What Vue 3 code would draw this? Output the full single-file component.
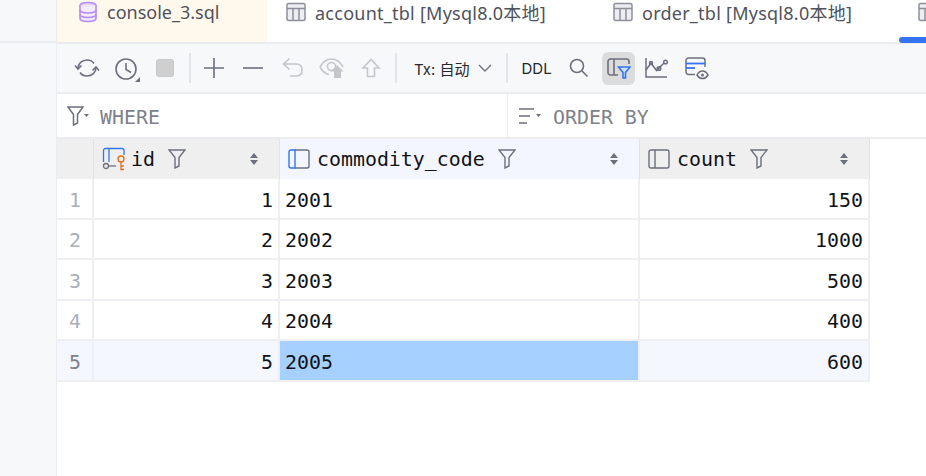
<script setup>
const rows = [
  { id: 1, code: 2001, count: 150 },
  { id: 2, code: 2002, count: 1000 },
  { id: 3, code: 2003, count: 500 },
  { id: 4, code: 2004, count: 400 },
  { id: 5, code: 2005, count: 600 }
]
</script>

<template>
  <div class="page">
    <aside class="side">
      <div class="side-top"></div>
    </aside>

    <main class="main">
      <div class="tabs">
        <div class="tab tab-console">
          <svg width="20" height="22" viewBox="0 0 20 22" fill="none" stroke="#b48cf2" stroke-width="1.6">
            <ellipse cx="10" cy="4.5" rx="8" ry="3" fill="#ead9fc" />
            <path d="M2 4.5v13c0 1.7 3.6 3 8 3s8-1.3 8-3v-13" fill="#f3eafd" />
            <path d="M2 9c0 1.7 3.6 3 8 3s8-1.3 8-3M2 13.5c0 1.7 3.6 3 8 3s8-1.3 8-3" />
          </svg>
          <span>console_3.sql</span>
        </div>
        <div class="tab tab-account">
          <svg class="tbl-icon" width="20" height="20" viewBox="0 0 20 20" fill="#eeeef2" stroke="#8d8f9b" stroke-width="1.5">
            <rect x="1" y="1.5" width="18" height="17" rx="2" />
            <path d="M1 6.5h18M7 6.5v12M13 6.5v12" fill="none" />
          </svg>
          <span class="tbl-name">account_tbl [Mysql8.0本地]</span>
        </div>
        <div class="tab tab-order">
          <svg class="tbl-icon" width="20" height="20" viewBox="0 0 20 20" fill="#eeeef2" stroke="#8d8f9b" stroke-width="1.5">
            <rect x="1" y="1.5" width="18" height="17" rx="2" />
            <path d="M1 6.5h18M7 6.5v12M13 6.5v12" fill="none" />
          </svg>
          <span class="tbl-name">order_tbl [Mysql8.0本地]</span>
        </div>
        <div class="tab tab-active">
          <svg class="tbl-icon" width="20" height="20" viewBox="0 0 20 20" fill="#eeeef2" stroke="#8d8f9b" stroke-width="1.5">
            <rect x="1" y="1.5" width="18" height="17" rx="2" />
            <path d="M1 6.5h18M7 6.5v12M13 6.5v12" fill="none" />
          </svg>
        </div>
      </div>

      <div class="toolbar">
        <button class="tool">
          <svg width="26" height="22" viewBox="0 0 26 22" fill="none" stroke="#6c707e" stroke-width="1.6">
            <path d="M4 11.5C4 6.5 8 3 13 3c3 0 5.5 1.2 7 3.5" />
            <path d="M22 10.5c0 5-4 8.500-9 8.500-3 0-5.500-1.200-7-3.500" />
            <path d="M1 8.500l3 3.500 3.500-3.500M18.500 13.500l3.500-3.500 3 3.500" />
          </svg>
        </button>
        <button class="tool">
          <svg width="28" height="28" viewBox="0 0 28 28" fill="none" stroke="#6c707e" stroke-width="1.6">
            <circle cx="14" cy="15" r="10" />
            <path d="M14 9v6.500l5 3" />
            <path d="M28 23v5h-5z" fill="#6c707e" stroke="none" />
          </svg>
        </button>
        <button class="tool">
          <span class="stop"></span>
        </button>
        <span class="sep sep-first"></span>
        <button class="tool">
          <svg width="20" height="20" viewBox="0 0 20 20" stroke="#6c707e" stroke-width="1.600">
            <path d="M0 10h20M10 0v20" />
          </svg>
        </button>
        <button class="tool">
          <svg width="20" height="20" viewBox="0 0 20 20" stroke="#6c707e" stroke-width="1.600">
            <path d="M0 10h20" />
          </svg>
        </button>
        <button class="tool tool-undo">
          <svg width="22" height="22" viewBox="0 0 22 22" fill="none" stroke="#c4c6cc" stroke-width="1.600">
            <path d="M7.500 1.500L1.500 7l6 5.500" />
            <path d="M1.500 7h13c3.500 0 5.500 2.500 5.500 6s-2 6-5.500 6H8" />
          </svg>
        </button>
        <button class="tool">
          <svg width="26" height="22" viewBox="0 0 26 22" fill="none" stroke="#c4c6cc" stroke-width="1.600">
            <path d="M1 10c3-5.500 7-8 11.500-8S21 4.500 24 10" />
            <path d="M1 10c2.500 4.500 5.500 7 9 7.500" />
            <circle cx="12.500" cy="9.500" r="4" />
            <path d="M18 8l6.500 6.500H22V21h-7v-6.500h-3z" fill="#c4c6cc" stroke="none" />
          </svg>
        </button>
        <button class="tool">
          <svg width="20" height="20" viewBox="0 0 20 20" fill="none" stroke="#c4c6cc" stroke-width="1.600">
            <path d="M10 1.500L2 10h4.500v8.500h7V10H18z" />
          </svg>
        </button>
        <span class="sep sep-tx"></span>
        <div class="tx">
          <span>Tx: 自动</span>
          <svg width="14" height="8" viewBox="0 0 14 8" fill="none" stroke="#6c707e" stroke-width="1.400">
            <path d="M1 1l6 6 6-6" />
          </svg>
        </div>
        <span class="sep sep-ddl"></span>
        <span class="ddl">DDL</span>
        <button class="tool tool-search">
          <svg width="20" height="20" viewBox="0 0 20 20" fill="none" stroke="#6c707e" stroke-width="1.600">
            <circle cx="8" cy="8" r="6.500" />
            <path d="M13 13l5.500 5.500" />
          </svg>
        </button>
        <button class="tool tool-on">
          <svg width="24" height="24" viewBox="0 0 24 24" fill="none" stroke="#6c707e" stroke-width="1.600">
            <path d="M14 3H3.500A2.500 2.500 0 0 0 1 5.500v11A2.500 2.500 0 0 0 3.500 19H11M7 3v16M14 3h6a2.500 2.500 0 0 1 2 2.500V8" />
            <path d="M11.500 11h11.500l-4.500 5.500V22h-2.500v-5.500z" stroke="#3574f0" fill="#cfe0fb" />
          </svg>
        </button>
        <button class="tool tool-chart">
          <svg width="24" height="20" viewBox="0 0 24 20" fill="none" stroke="#6c707e" stroke-width="1.500">
            <path d="M1 0v19h21" />
            <path d="M1 12l5-7 5.500 7.500L19 5" />
            <circle cx="6" cy="5" r="1.500" />
            <circle cx="14" cy="10.500" r="1.800" />
            <circle cx="20.500" cy="4" r="1.800" />
          </svg>
        </button>
        <button class="tool tool-view">
          <svg width="24" height="24" viewBox="0 0 24 24" fill="none" stroke="#6c707e" stroke-width="1.500">
            <path d="M10 18.500H3.500A2.500 2.500 0 0 1 1 16V4.500A2.500 2.500 0 0 1 3.500 2h14A2.500 2.500 0 0 1 20 4.500V11" />
            <path d="M1 7.500h19" stroke="#3574f0" stroke-width="1.800" />
            <path d="M1 12h9" stroke="#3574f0" stroke-width="1.800" />
            <path d="M12 19c1.500-3 3.500-4 5.500-4s4 1 5.500 4c-1.500 2.500-3.500 3.500-5.500 3.500S13.500 21.500 12 19z" fill="#f7f8fa" />
            <circle cx="17.500" cy="19" r="1.500" fill="#6c707e" stroke="none" />
          </svg>
        </button>
      </div>

      <div class="filters">
        <div class="filter filter-where">
          <svg width="22" height="20" viewBox="0 0 22 20" fill="none" stroke="#6c707e" stroke-width="1.500">
            <path d="M1 1h15l-5.500 7.500V17L6.500 19V8.500z" />
            <path d="M17 8h5l-2.500 3z" fill="#6c707e" stroke="none" />
          </svg>
          <span class="filter-word">WHERE</span>
        </div>
        <div class="filter filter-order">
          <svg width="22" height="16" viewBox="0 0 22 16" fill="none" stroke="#6c707e" stroke-width="1.500">
            <path d="M0 1h15M0 8h11M0 15h8" />
            <path d="M17 6h5l-2.500 3z" fill="#6c707e" stroke="none" />
          </svg>
          <span class="filter-word">ORDER BY</span>
        </div>
      </div>

      <div class="grid">
        <div class="cell head corner"></div>
        <div class="cell head">
          <svg class="col-key" width="24" height="24" viewBox="0 0 24 24" fill="none" stroke="#3574f0" stroke-width="1.300">
            <path d="M1.500 15V3.500A2 2 0 0 1 3.500 1.500H7v13.500M7 1.500h13a2 2 0 0 1 2 2V8" />
            <circle cx="4" cy="19" r="2.500" stroke="#6c707e" />
            <path d="M7 19h7" stroke="#6c707e" />
            <circle cx="19" cy="12" r="3" stroke="#e66d17" />
            <path d="M19 15v7.500h3M19 19h3" stroke="#e66d17" />
          </svg>
          <span class="col-name">id</span>
          <svg class="col-filter" width="18" height="20" viewBox="0 0 18 20" fill="none" stroke="#6c707e" stroke-width="1.400">
            <path d="M1 1h16l-6 7.500V17l-4 2V8.500z" />
          </svg>
          <svg class="col-sort" width="10" height="12" viewBox="0 0 10 12" fill="#6c707e">
            <path d="M5 0l4 5H1zM5 12L1 7h8z" />
          </svg>
        </div>
        <div class="cell head head-on">
          <svg class="col-ico" width="22" height="20" viewBox="0 0 22 20" fill="none" stroke="#6c707e" stroke-width="1.400">
            <path d="M7 1h12a2 2 0 0 1 2 2v14a2 2 0 0 1-2 2H7" />
            <path d="M7 1H3a2 2 0 0 0-2 2v14a2 2 0 0 0 2 2h4V1z" stroke="#3574f0" />
          </svg>
          <span class="col-name">commodity_code</span>
          <svg class="col-filter" width="18" height="20" viewBox="0 0 18 20" fill="none" stroke="#6c707e" stroke-width="1.400">
            <path d="M1 1h16l-6 7.500V17l-4 2V8.500z" />
          </svg>
          <svg class="col-sort" width="10" height="12" viewBox="0 0 10 12" fill="#6c707e">
            <path d="M5 0l4 5H1zM5 12L1 7h8z" />
          </svg>
        </div>
        <div class="cell head">
          <svg class="col-ico" width="22" height="20" viewBox="0 0 22 20" fill="none" stroke="#6c707e" stroke-width="1.400">
            <rect x="1" y="1" width="20" height="18" rx="2" />
            <path d="M7 1v18" />
          </svg>
          <span class="col-name">count</span>
          <svg class="col-filter" width="18" height="20" viewBox="0 0 18 20" fill="none" stroke="#6c707e" stroke-width="1.400">
            <path d="M1 1h16l-6 7.500V17l-4 2V8.500z" />
          </svg>
          <svg class="col-sort" width="10" height="12" viewBox="0 0 10 12" fill="#6c707e">
            <path d="M5 0l4 5H1zM5 12L1 7h8z" />
          </svg>
        </div>

        <template v-for="row in rows" :key="row.id">
          <div class="cell num" :class="{ 'row-on': row.id === 5 }">{{ row.id }}</div>
          <div class="cell right" :class="{ 'row-on': row.id === 5 }">{{ row.id }}</div>
          <div class="cell" :class="{ picked: row.id === 5 }">{{ row.code }}</div>
          <div class="cell right" :class="{ 'row-on': row.id === 5 }">{{ row.count }}</div>
        </template>
      </div>
    </main>
  </div>
</template>

<style scoped>
.page {
  width: 926px;
  height: 476px;
  display: flex;
  overflow: hidden;
  background: #fff;
}

.side {
  width: 56px;
  flex: none;
  background: #f7f8fa;
  border-right: 1px solid #ebecf0;
}

.side-top {
  height: 41px;
  border-bottom: 2px solid #ebecf0;
}

.main {
  flex: 1;
  min-width: 0;
}

.tabs {
  height: 42px;
  display: flex;
  border-bottom: 2px solid #ebecf0;
  font-family: "Noto Sans", "Noto Sans CJK SC", sans-serif;
  font-size: 18px;
  color: #50525b;
}

.tab {
  height: 42px;
  display: flex;
  align-items: center;
  gap: 9px;
  padding-bottom: 18px;
  box-sizing: border-box;
  white-space: nowrap;
  flex: none;
}

.tab svg {
  flex: none;
}

.tbl-name {
  letter-spacing: 0.25px;
}

.tab-console {
  width: 210px;
  padding-left: 21px;
  background: #fff8ed;
}

.tab-account {
  width: 327px;
  padding-left: 19px;
}

.tab-order {
  width: 305px;
  padding-left: 19px;
}

.tab-active {
  width: 27px;
  padding-left: 19px;
  position: relative;
}

.tab-active::after {
  content: "";
  position: absolute;
  left: 0;
  right: 0;
  bottom: -1px;
  height: 6px;
  background: #3574f0;
  border-radius: 3px 0 0 3px;
}

.toolbar {
  height: 48px;
  display: flex;
  align-items: center;
  padding-left: 10px;
  background: #f7f8fa;
  border-bottom: 2px solid #ebecf0;
}

.tool {
  width: 39px;
  height: 33px;
  flex: none;
  display: flex;
  align-items: center;
  justify-content: center;
  padding: 0;
  border: none;
  background: none;
}

.tool-undo {
  margin-left: 1px;
}

.stop {
  width: 18px;
  height: 18px;
  background: #cfcfd0;
  border: 1px solid #c8c8ca;
  border-radius: 3px;
  box-sizing: border-box;
}

.sep {
  width: 2px;
  height: 30px;
  flex: none;
  background: #e3e4e8;
}

.sep-first {
  margin: 0 3px 0 5px;
}

.sep-tx {
  margin: 0 17px 0 5px;
}

.sep-ddl {
  margin: 0 13px 0 14px;
}

.tx {
  display: flex;
  align-items: center;
  gap: 9px;
  font-family: "Inter", "Noto Sans CJK SC", sans-serif;
  font-size: 15px;
  color: #26282e;
}

.ddl {
  width: 31px;
  font-family: "Inter", sans-serif;
  font-size: 15px;
  color: #26282e;
}

.tool-search {
  width: 33px;
  margin-left: 10.5px;
}

.tool-on {
  width: 33px;
  margin-left: 6.5px;
  background: #dcdcdd;
  border-radius: 6px;
}

.tool-chart {
  margin-left: 2.5px;
}

.tool-view {
  margin-left: 1px;
}

.filters {
  height: 43px;
  display: flex;
  border-bottom: 2px solid #ebecf0;
  font-family: "DejaVu Sans Mono", monospace;
  font-size: 19.9px;
  color: #7f8189;
}

.filter {
  display: flex;
  align-items: center;
  gap: 11px;
  padding-top: 1px;
  box-sizing: border-box;
}

.filter-word {
  padding-top: 2px;
}

.filter-where {
  width: 451px;
  padding-left: 10px;
  border-right: 1px solid #ebecf0;
}

.filter-order {
  padding-left: 11px;
  gap: 12px;
}

.grid {
  width: 813px;
  display: grid;
  grid-template-columns: 37px 186px 360px 230px;
  grid-template-rows: 40px repeat(5, 40.5px);
  font-family: "DejaVu Sans Mono", monospace;
  font-size: 19.9px;
  color: #111318;
}

.cell {
  display: flex;
  align-items: center;
  padding: 4px 5px 0;
  box-sizing: border-box;
  border-right: 2px solid #eeeff2;
  border-bottom: 2px solid #eeeff2;
  min-width: 0;
}

.head {
  background: #efefef;
  border-bottom: none;
  border-right: 1px solid #e3e3e5;
  padding: 0 5px 0 8px;
}

.head-on {
  background: #f3f6fe;
}

.corner {
  background: #efefef;
}

.col-key {
  margin-right: 5px;
}

.col-ico {
  margin-right: 7px;
}

.col-filter {
  margin-left: 13px;
}

.col-sort {
  margin-left: auto;
  margin-right: 15px;
}

.num {
  justify-content: center;
  padding: 4px 0 0 1px;
  color: #a9afbb;
}

.right {
  justify-content: flex-end;
}

.row-on {
  background: #f4f7fe;
}

.num.row-on {
  color: #7f8189;
}

.picked {
  background: #a5d0ff;
}
</style>

<style>
html,
body {
  margin: 0;
  overflow: hidden;
}
</style>
